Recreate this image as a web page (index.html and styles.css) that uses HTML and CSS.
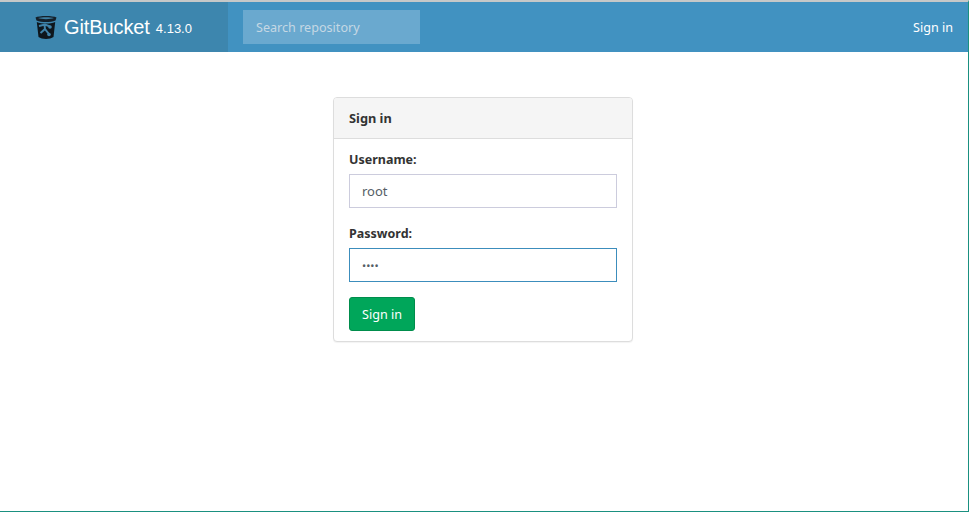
FILE: index.html
```html
<!DOCTYPE html>
<html lang="en">

<head>
    <meta charset="UTF-8">
    <title>Sign in - GitBucket</title>
    <link rel="stylesheet" href="styles.css">
</head>

<body>

    <div class="window">
        <header class="topbar">
            <a class="brand" href="#">
                <svg class="logo" viewBox="0 0 22 24" width="22" height="24">
                    <path d="M.5 2.500C4 .5 18 .5 21.500 2.500L20.500 5.500C15 7.500 7 7.500 1.500 5.500Z" fill="#14202a"/>
                    <path d="M3 3C7 2 15 2 19 3C15 4.500 7 4.500 3 3Z" fill="#3f7fa3"/>
                    <path d="M1.800 7C7 9 15 9 20.200 7L18.500 22C15 24.500 7 24.500 3.500 22Z" fill="#0e161c"/>
                    <path d="M4 11L10 9.500L15 11.500M9.500 10L10 14L14 19M10 14L5.500 18" fill="none" stroke="#3f82a8" stroke-width="2"/>
                    <circle cx="15" cy="12" r="1.800" fill="#3f82a8"/>
                    <circle cx="14" cy="19.500" r="1.800" fill="#3f82a8"/>
                </svg>
                <span class="brand-name">GitBucket</span>
                <span class="brand-version">4.13.0</span>
            </a>
            <div class="topbar-main">
                <input class="search" type="text" placeholder="Search repository">
                <a class="topbar-link" href="#">Sign in</a>
            </div>
        </header>

        <main class="content">
            <section class="panel">
                <div class="panel-heading">Sign in</div>
                <form class="panel-body">
                    <div class="field">
                        <label for="username">Username:</label>
                        <input class="text-input" id="username" type="text" value="root">
                    </div>
                    <div class="field">
                        <label for="password">Password:</label>
                        <input class="text-input text-input-focus" id="password" type="password" value="root">
                    </div>
                    <button class="btn-success" type="button">Sign in</button>
                </form>
            </section>
        </main>
    </div>

</body>

</html>
```

FILE: styles.css
```css
* {
    box-sizing: border-box;
}

html,
body {
    margin: 0;
    height: 100%;
}

body {
    font-family: "Noto Sans", Arial, sans-serif;
    font-size: 14px;
    color: #333;
    background-color: #fff;
}

.window {
    height: 512px;
    display: flex;
    flex-direction: column;
    border-top: 2px solid #c6c8c8;
    border-right: 1px solid #1a9080;
    border-bottom: 1px solid #1a9080;
}

.topbar {
    display: flex;
    height: 50px;
    flex-shrink: 0;
    background-color: #4192c1;
}

.topbar a {
    color: #fff;
    text-decoration: none;
}

.brand {
    display: flex;
    align-items: center;
    width: 228px;
    padding-left: 35px;
    background-color: #3d86ae;
}

.logo {
    margin-right: 7px;
}

.brand-name {
    font-family: "Liberation Sans", Arial, sans-serif;
    font-size: 20px;
    letter-spacing: -0.1px;
}

.brand-version {
    font-family: "Liberation Sans", Arial, sans-serif;
    font-size: 13px;
    margin: 3px 0 0 6px;
}

.topbar-main {
    flex: 1;
    display: flex;
    align-items: center;
    justify-content: space-between;
    padding: 0 15px;
}

.search {
    width: 177px;
    height: 34px;
    padding: 0 13px;
    border: 0;
    font: inherit;
    font-size: 12.6px;
    color: #fff;
    background-color: #6aa9cf;
}

.search::placeholder {
    color: #c5d8e4;
    opacity: 1;
}

.topbar-link {
    font-size: 12.6px;
}

.content {
    flex: 1;
    padding-top: 45px;
}

.panel {
    width: 300px;
    height: 245px;
    margin-left: 333px;
    background: #fff;
    border: 1px solid #ddd;
    border-radius: 4px;
    box-shadow: 0 1px 1px rgba(0, 0, 0, 0.05);
}

.panel-heading {
    height: 41px;
    padding: 0 15px;
    line-height: 40px;
    font-size: 12.8px;
    font-weight: 700;
    background-color: #f5f5f5;
    border-bottom: 1px solid #ddd;
    border-radius: 3px 3px 0 0;
}

.panel-body {
    padding: 11px 15px 0;
}

.field {
    margin-bottom: 16px;
}

.field:last-of-type {
    margin-bottom: 15px;
}

label {
    display: block;
    height: 24px;
    line-height: 19px;
    font-size: 12.5px;
    font-weight: 700;
}

.text-input {
    display: block;
    width: 268px;
    height: 34px;
    padding: 0 12px;
    font: inherit;
    font-size: 13px;
    color: #555e66;
    background: #fff;
    border: 1px solid #ccccdd;
    outline: 0;
}

.text-input-focus {
    font-size: 11px;
    border-color: #3c8dbc;
}

.btn-success {
    display: block;
    width: 66px;
    height: 34px;
    padding: 0;
    font: inherit;
    font-size: 12.6px;
    color: #fff;
    background-color: #00a65a;
    border: 1px solid #008d4c;
    border-radius: 3px;
}
```
